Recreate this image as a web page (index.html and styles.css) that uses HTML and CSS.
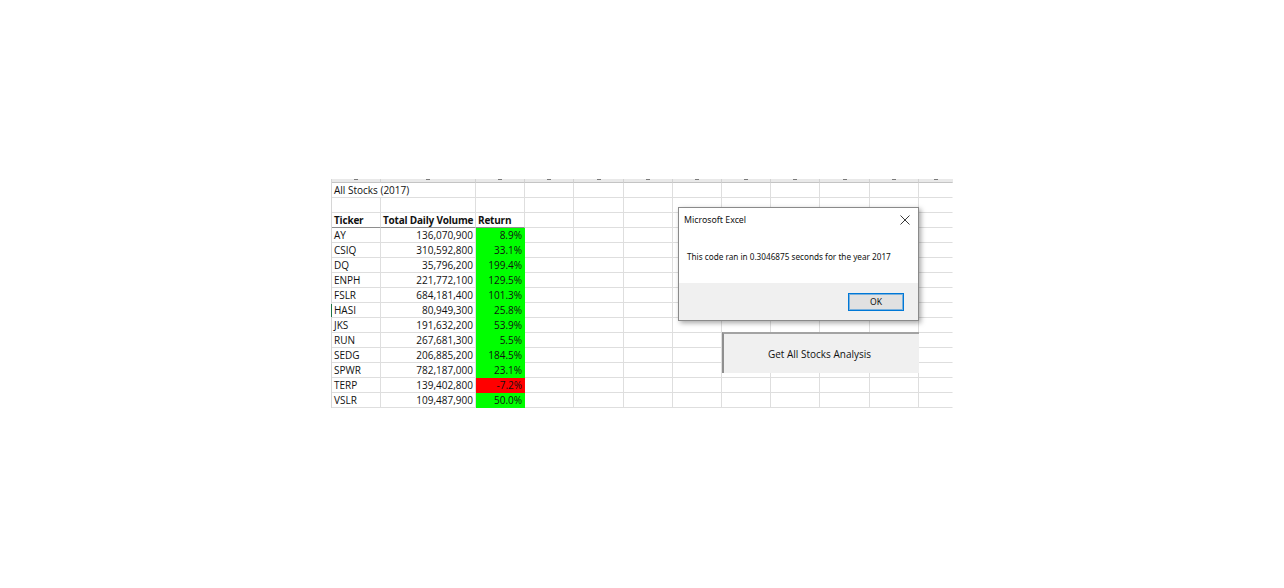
FILE: index.html
```html
<!DOCTYPE html>
<html>
<head>
<meta charset="utf-8">
<link rel="stylesheet" href="styles.css">
</head>
<body>
<div class="sheet">
  <div class="hd"></div><div class="hd"></div><div class="hd"></div><div class="hd"></div><div class="hd"></div><div class="hd"></div><div class="hd"></div><div class="hd"></div><div class="hd"></div><div class="hd"></div><div class="hd"></div><div class="hd last"></div>

  <div class="c span2">All Stocks (2017)</div><div class="c"></div><div class="c"></div><div class="c"></div><div class="c"></div><div class="c"></div><div class="c"></div><div class="c"></div><div class="c"></div><div class="c"></div><div class="c last"></div>

  <div class="c"></div><div class="c"></div><div class="c"></div><div class="c"></div><div class="c"></div><div class="c"></div><div class="c"></div><div class="c"></div><div class="c"></div><div class="c"></div><div class="c"></div><div class="c last"></div>

  <div class="c h">Ticker</div><div class="c h">Total Daily Volume</div><div class="c h">Return</div><div class="c"></div><div class="c"></div><div class="c"></div><div class="c"></div><div class="c"></div><div class="c"></div><div class="c"></div><div class="c"></div><div class="c last"></div>

  <div class="c">AY</div><div class="c num">136,070,900</div><div class="c num g">8.9%</div><div class="c"></div><div class="c"></div><div class="c"></div><div class="c"></div><div class="c"></div><div class="c"></div><div class="c"></div><div class="c"></div><div class="c last"></div>

  <div class="c">CSIQ</div><div class="c num">310,592,800</div><div class="c num g">33.1%</div><div class="c"></div><div class="c"></div><div class="c"></div><div class="c"></div><div class="c"></div><div class="c"></div><div class="c"></div><div class="c"></div><div class="c last"></div>

  <div class="c">DQ</div><div class="c num">35,796,200</div><div class="c num g">199.4%</div><div class="c"></div><div class="c"></div><div class="c"></div><div class="c"></div><div class="c"></div><div class="c"></div><div class="c"></div><div class="c"></div><div class="c last"></div>

  <div class="c">ENPH</div><div class="c num">221,772,100</div><div class="c num g">129.5%</div><div class="c"></div><div class="c"></div><div class="c"></div><div class="c"></div><div class="c"></div><div class="c"></div><div class="c"></div><div class="c"></div><div class="c last"></div>

  <div class="c">FSLR</div><div class="c num">684,181,400</div><div class="c num g">101.3%</div><div class="c"></div><div class="c"></div><div class="c"></div><div class="c"></div><div class="c"></div><div class="c"></div><div class="c"></div><div class="c"></div><div class="c last"></div>

  <div class="c sel">HASI</div><div class="c num">80,949,300</div><div class="c num g">25.8%</div><div class="c"></div><div class="c"></div><div class="c"></div><div class="c"></div><div class="c"></div><div class="c"></div><div class="c"></div><div class="c"></div><div class="c last"></div>

  <div class="c">JKS</div><div class="c num">191,632,200</div><div class="c num g">53.9%</div><div class="c"></div><div class="c"></div><div class="c"></div><div class="c"></div><div class="c"></div><div class="c"></div><div class="c"></div><div class="c"></div><div class="c last"></div>

  <div class="c">RUN</div><div class="c num">267,681,300</div><div class="c num g">5.5%</div><div class="c"></div><div class="c"></div><div class="c"></div><div class="c"></div><div class="c"></div><div class="c"></div><div class="c"></div><div class="c"></div><div class="c last"></div>

  <div class="c">SEDG</div><div class="c num">206,885,200</div><div class="c num g">184.5%</div><div class="c"></div><div class="c"></div><div class="c"></div><div class="c"></div><div class="c"></div><div class="c"></div><div class="c"></div><div class="c"></div><div class="c last"></div>

  <div class="c">SPWR</div><div class="c num">782,187,000</div><div class="c num g">23.1%</div><div class="c"></div><div class="c"></div><div class="c"></div><div class="c"></div><div class="c"></div><div class="c"></div><div class="c"></div><div class="c"></div><div class="c last"></div>

  <div class="c">TERP</div><div class="c num">139,402,800</div><div class="c num r">-7.2%</div><div class="c"></div><div class="c"></div><div class="c"></div><div class="c"></div><div class="c"></div><div class="c"></div><div class="c"></div><div class="c"></div><div class="c last"></div>

  <div class="c">VSLR</div><div class="c num">109,487,900</div><div class="c num g">50.0%</div><div class="c"></div><div class="c"></div><div class="c"></div><div class="c"></div><div class="c"></div><div class="c"></div><div class="c"></div><div class="c"></div><div class="c last"></div>

  <div class="dialog">
    <div class="dlg-title">
      <span>Microsoft Excel</span>
      <svg class="close" width="10" height="10" viewBox="0 0 10 10"><path d="M0.5 0.5 L9.5 9.5 M9.5 0.5 L0.5 9.5" stroke="#3a3a3a" stroke-width="1" fill="none"/></svg>
    </div>
    <div class="dlg-msg">This code ran in 0.3046875 seconds for the year 2017</div>
    <div class="dlg-foot">
      <div class="ok">OK</div>
    </div>
  </div>

  <div class="macro">Get All Stocks Analysis</div>
</div>
</body>
</html>
```

FILE: styles.css
```css
html, body {
  margin: 0;
  padding: 0;
  background: #ffffff;
}

body {
  padding: 179px 0 0 331px;
  height: 588px;
  box-sizing: border-box;
}

.sheet {
  position: relative;
  display: grid;
  grid-template-columns: 49px 95px 49px 49px 50px 49px 49px 49px 49px 50px 49px 34px;
  grid-template-rows: 4px;
  grid-auto-rows: 15px;
  width: 622px;
  border-left: 1px solid #d6d6d6;
  font-family: "Open Sans", "Noto Sans", sans-serif;
  color: #000;
}

.hd {
  position: relative;
  background: #e9e9e9;
  border-right: 1px solid #d2d2d2;
  border-bottom: 1px solid #c4c4c4;
  box-sizing: border-box;
}

.hd::before {
  content: "";
  position: absolute;
  left: 50%;
  top: 0;
  width: 4px;
  height: 1px;
  margin-left: -2px;
  background: #7a7a7a;
}

.c {
  position: relative;
  box-sizing: border-box;
  border-right: 1px solid #dedede;
  border-bottom: 1px solid #dedede;
  padding: 1px 2px 0;
  font-size: 10px;
  line-height: 13px;
  white-space: nowrap;
  overflow: hidden;
  color: #111;
}

.last {
  border-right-color: transparent;
}

.span2 {
  grid-column: span 2;
}

.num {
  text-align: right;
}

.h {
  font-weight: bold;
  letter-spacing: -0.2px;
  border-bottom-color: #8e8e8e;
}

.g {
  background: #00ff00;
  border-right-color: #00ff00;
  border-bottom-color: #00ff00;
}

.r {
  background: #ff0000;
  border-right-color: #ff0000;
  border-bottom-color: #ff0000;
}

.sel {
  overflow: visible;
}

.sel::before {
  content: "";
  position: absolute;
  left: -1px;
  top: 1px;
  bottom: 0;
  width: 1px;
  background: #217346;
}

.dialog {
  position: absolute;
  left: 346px;
  top: 28px;
  width: 241px;
  height: 114px;
  box-sizing: border-box;
  border: 1px solid #8a8a8a;
  background: #ffffff;
  box-shadow: 2px 2px 5px rgba(0, 0, 0, 0.35);
  display: flex;
  flex-direction: column;
  font-family: "Noto Sans", "Open Sans", sans-serif;
  color: #111;
}

.dlg-title {
  display: flex;
  justify-content: space-between;
  align-items: center;
  height: 23px;
  padding: 0 8px 0 5px;
  font-size: 8.8px;
}

.close {
  display: block;
}

.dlg-msg {
  flex: 1;
  padding: 20px 0 0 8px;
  font-size: 8.2px;
  line-height: 12px;
  white-space: nowrap;
}

.dlg-foot {
  height: 37px;
  background: #f0f0f0;
  display: flex;
  justify-content: flex-end;
  align-items: center;
  padding-right: 14px;
}

.ok {
  width: 56px;
  height: 18px;
  box-sizing: border-box;
  background: #e1e1e1;
  border: 1px solid #0078d7;
  box-shadow: inset 0 0 0 1px rgba(0, 120, 215, 0.45);
  display: flex;
  align-items: center;
  justify-content: center;
  font-size: 8.6px;
}

.macro {
  position: absolute;
  left: 390px;
  top: 153px;
  width: 197px;
  height: 41px;
  box-sizing: border-box;
  background: #f0f0f0;
  border-top: 2px solid #a3a3a3;
  border-left: 2px solid #8f8f8f;
  padding-right: 4px;
  display: flex;
  align-items: center;
  justify-content: center;
  font-size: 10px;
  color: #111;
}
```
